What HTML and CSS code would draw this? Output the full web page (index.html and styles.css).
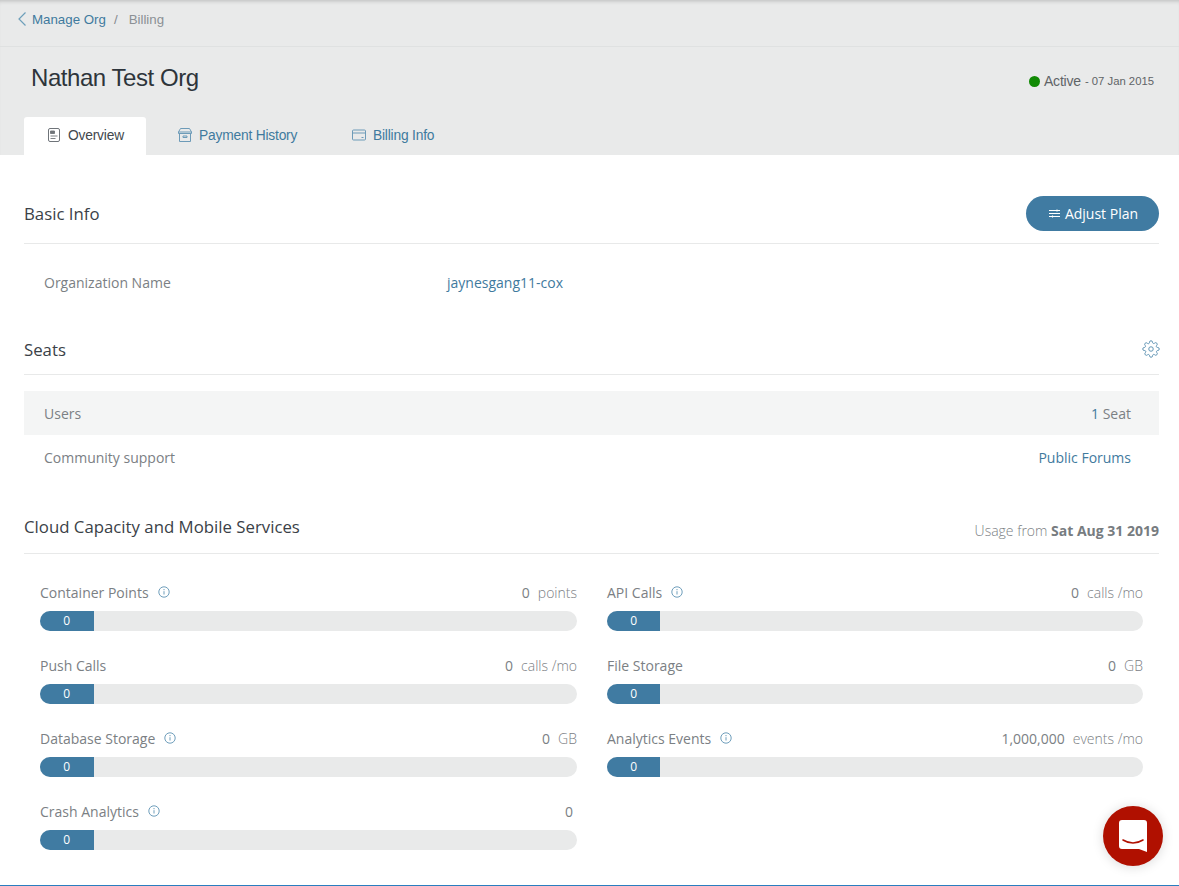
FILE: index.html
```html
<!DOCTYPE html>
<html lang="en">
<head>
<meta charset="utf-8">
<title>Billing</title>
<link rel="stylesheet" href="styles.css">
</head>
<body>
<div class="page">
  <header class="top">
    <nav class="crumbs">
      <svg class="crumb-back" width="10" height="16" viewBox="0 0 10 16"><path d="M8.5 1.5 2 8l6.500 6.500" fill="none" stroke="#6d9fba" stroke-width="1.200"/></svg>
      <a class="link">Manage Org</a><span class="sep">/</span><span class="current">Billing</span>
    </nav>
    <div class="title-row">
      <h1 class="org-title">Nathan Test Org</h1>
      <div class="status"><span class="dot"></span><span class="status-text">Active</span><span class="status-date">- 07 Jan 2015</span></div>
    </div>
    <div class="tabs">
      <a class="tab tab-active">
        <svg width="12" height="14" viewBox="0 0 12 14"><rect x=".5" y=".5" width="11" height="13" rx="1.500" fill="none" stroke="#6f7479"/><path d="M2.500 3h4v2.500h-4zM2.500 8h7M2.500 10.500h5" fill="#6f7479" stroke="#6f7479" stroke-width=".9"/></svg>
        Overview</a>
      <a class="tab">
        <svg width="14" height="14" viewBox="0 0 14 14" fill="none" stroke="#6d9bb8"><path d="M2.500 .5h9l2 3.500H.5zM.5 4v1.500h13V4M1.500 5.500v8h11v-8M5 8h4v1.500H5z"/></svg>
        Payment History</a>
      <a class="tab">
        <svg width="14" height="12" viewBox="0 0 14 12" fill="none" stroke="#6d9bb8"><rect x=".5" y="1" width="13" height="10" rx="1"/><path d="M.5 4h13M9.500 8.500h2"/></svg>
        Billing Info</a>
    </div>
  </header>

  <main class="content">
    <section class="basic">
      <div class="section-head head-basic">
        <h2 class="section-title">Basic Info</h2>
        <button class="btn"><svg width="11" height="9" viewBox="0 0 11 9" stroke="#fff" stroke-width="1.100"><path d="M0 1.500h11M0 4.500h11M0 7.500h11M8 .5v2M3.500 6.500v2"/></svg>Adjust Plan</button>
      </div>
      <div class="info-row"><span class="info-label">Organization Name</span><a class="link-plain">jaynesgang11-cox</a></div>
    </section>

    <section class="seats">
      <div class="section-head head-seats">
        <h2 class="section-title">Seats</h2>
        <svg class="gear" width="18" height="18" viewBox="0 0 24 24" fill="none" stroke="#5f93b3" stroke-width="1.300"><circle cx="12" cy="12" r="3"/><path d="M19.400 15a1.650 1.650 0 0 0 .33 1.820l.06.06a2 2 0 1 1-2.830 2.830l-.06-.06a1.650 1.650 0 0 0-2.800 1.170V21a2 2 0 1 1-4 0v-.09a1.650 1.650 0 0 0-2.800-1.170l-.06.06a2 2 0 1 1-2.830-2.830l.06-.06A1.650 1.650 0 0 0 3.090 14H3a2 2 0 1 1 0-4h.09A1.650 1.650 0 0 0 4.260 7.200l-.06-.06a2 2 0 1 1 2.830-2.830l.06.06A1.650 1.650 0 0 0 10 3.090V3a2 2 0 1 1 4 0v.09a1.650 1.650 0 0 0 2.800 1.170l.06-.06a2 2 0 1 1 2.830 2.830l-.06.06A1.650 1.650 0 0 0 20.910 10H21a2 2 0 1 1 0 4h-.09a1.650 1.650 0 0 0-1.510 1z"/></svg>
      </div>
      <div class="seat-row seat-shaded"><span>Users</span><span class="seat-value"><span class="seat-num">1</span> Seat</span></div>
      <div class="seat-row"><span>Community support</span><a class="link-plain">Public Forums</a></div>
    </section>

    <section class="capacity">
      <div class="section-head head-cap">
        <h2 class="section-title">Cloud Capacity and Mobile Services</h2>
        <span class="usage">Usage from <b>Sat Aug 31 2019</b></span>
      </div>
      <div class="meters">
        <div class="meter">
          <div class="meter-top"><span class="meter-name">Container Points<svg class="info" viewBox="0 0 12 12"><circle cx="6" cy="6" r="5.200"/><path d="M6 5.200v3.300M6 3v1.200"/></svg></span><span class="meter-val"><span>0</span><span class="unit">points</span></span></div>
          <div class="bar"><div class="fill">0</div></div>
        </div>
        <div class="meter">
          <div class="meter-top"><span class="meter-name">API Calls<svg class="info" viewBox="0 0 12 12"><circle cx="6" cy="6" r="5.200"/><path d="M6 5.200v3.300M6 3v1.200"/></svg></span><span class="meter-val"><span>0</span><span class="unit">calls /mo</span></span></div>
          <div class="bar"><div class="fill">0</div></div>
        </div>
        <div class="meter">
          <div class="meter-top"><span class="meter-name">Push Calls</span><span class="meter-val"><span>0</span><span class="unit">calls /mo</span></span></div>
          <div class="bar"><div class="fill">0</div></div>
        </div>
        <div class="meter">
          <div class="meter-top"><span class="meter-name">File Storage</span><span class="meter-val"><span>0</span><span class="unit">GB</span></span></div>
          <div class="bar"><div class="fill">0</div></div>
        </div>
        <div class="meter">
          <div class="meter-top"><span class="meter-name">Database Storage<svg class="info" viewBox="0 0 12 12"><circle cx="6" cy="6" r="5.200"/><path d="M6 5.200v3.300M6 3v1.200"/></svg></span><span class="meter-val"><span>0</span><span class="unit">GB</span></span></div>
          <div class="bar"><div class="fill">0</div></div>
        </div>
        <div class="meter">
          <div class="meter-top"><span class="meter-name">Analytics Events<svg class="info" viewBox="0 0 12 12"><circle cx="6" cy="6" r="5.200"/><path d="M6 5.200v3.300M6 3v1.200"/></svg></span><span class="meter-val"><span>1,000,000</span><span class="unit">events /mo</span></span></div>
          <div class="bar"><div class="fill">0</div></div>
        </div>
        <div class="meter">
          <div class="meter-top"><span class="meter-name">Crash Analytics<svg class="info" viewBox="0 0 12 12"><circle cx="6" cy="6" r="5.200"/><path d="M6 5.200v3.300M6 3v1.200"/></svg></span><span class="meter-val meter-val-bare"><span>0</span></span></div>
          <div class="bar"><div class="fill">0</div></div>
        </div>
      </div>
    </section>
  </main>

  <button class="chat" aria-label="Chat">
    <svg width="28" height="32" viewBox="0 0 28 32"><path d="M3 0h22a3 3 0 0 1 3 3v29l-8-3H3a3 3 0 0 1-3-3V3a3 3 0 0 1 3-3z" fill="#fff"/><path d="M4 20q10 6 20 0" fill="none" stroke="#b01000" stroke-width="1.600" stroke-linecap="round"/></svg>
  </button>
</div>
</body>
</html>
```

FILE: styles.css
```css
* { box-sizing: border-box; }
html, body { margin: 0; padding: 0; }
body {
  width: 1179px;
  height: 886px;
  overflow: hidden;
  background: #fff;
  font-family: "Open Sans", sans-serif;
  font-size: 14px;
  color: #7b8084;
}
.page {
  position: relative;
  height: 886px;
  border-bottom: 1px solid #2a7ebf;
  overflow: hidden;
}
.top {
  height: 155px;
  background: #e9eaea;
  box-shadow: inset 0 4px 4px -3px rgba(0, 0, 0, .2);
  font-family: "Liberation Sans", sans-serif;
}
.crumbs {
  height: 47px;
  padding: 11px 0 0 17px;
  display: flex;
  align-items: flex-start;
  font-size: 13.300px;
  line-height: 17px;
  border-bottom: 1px solid #dfe1e1;
}
.crumb-back { margin: 0 5px 0 0; }
.link { color: #3f7a9e; }
.sep { margin: 0 11px 0 8px; color: #85898d; }
.current { color: #8b9095; }
.title-row {
  height: 70px;
  padding: 0 25px 0 31px;
  display: flex;
  justify-content: space-between;
  align-items: flex-start;
}
.org-title {
  margin: 15px 0 0;
  font-size: 24px;
  line-height: 32px;
  font-weight: 400;
  color: #2e353b;
  letter-spacing: -.45px;
}
.status {
  margin-top: 26px;
  display: flex;
  align-items: center;
  line-height: 17px;
  color: #5f6467;
}
.dot {
  width: 11px;
  height: 11px;
  border-radius: 50%;
  background: #118a05;
  margin-right: 4px;
}
.status-text { font-size: 14px; margin-right: 4px; letter-spacing: -.2px; }
.status-date { font-size: 11.300px; }
.tabs {
  display: flex;
  padding-left: 24px;
  height: 38px;
}
.tab {
  width: 122px;
  height: 36px;
  display: flex;
  align-items: center;
  gap: 7px;
  padding-left: 24px;
  font-size: 13.800px;
  letter-spacing: -.2px;
  color: #3f7a9e;
  border-radius: 3px 3px 0 0;
  margin-right: 8px;
}
.tab:nth-child(2) { width: 174px; }
.tab:nth-child(3) { width: 150px; padding-left: 8px; margin-left: 8px; }
.tab-active { height: 38px; padding-bottom: 2px; gap: 8px; background: #fff; color: #42484d; }
.content { padding: 0 20px 0 24px; }
.section-head {
  display: flex;
  justify-content: space-between;
  border-bottom: 1px solid #e8e9e9;
}
.section-title {
  margin: 0;
  font-size: 16.800px;
  line-height: 22px;
  font-weight: 400;
  color: #3a4147;
}
.head-basic { height: 89px; padding-top: 41px; align-items: flex-start; }
.head-basic .section-title { margin-top: 7px; }
.btn {
  width: 133px;
  height: 35px;
  padding: 0 0 0 2px;
  border: 0;
  border-radius: 18px;
  background: #407ba2;
  color: #fff;
  font: 400 14px/35px "Open Sans", sans-serif;
  display: flex;
  align-items: center;
  justify-content: center;
  gap: 5px;
}
.info-row {
  display: flex;
  padding: 29px 0 0 20px;
  line-height: 20px;
  height: 83px;
}
.info-label { width: 403px; }
.link-plain { color: #3f7a9e; }
.head-seats { height: 48px; padding-top: 12px; }
.gear { margin: 1px -1px 0 0; }
.seat-row {
  display: flex;
  justify-content: space-between;
  align-items: center;
  height: 44px;
  padding: 0 28px 0 20px;
}
.seat-shaded { background: #f4f5f5; margin-top: 16px; }
.seat-num { color: #3f7a9e; }
.head-cap { margin-top: 29px; height: 46px; padding-top: 8px; align-items: flex-start; }
.usage { margin-top: 5px; font-size: 14px; font-weight: 300; }
.usage b { font-weight: 700; color: #777c80; }
.meters {
  padding: 0 16px;
  display: grid;
  grid-template-columns: 537px 536px;
  column-gap: 30px;
  row-gap: 24px;
  margin-top: 28px;
}
.meter-top {
  display: flex;
  justify-content: space-between;
  height: 29px;
  line-height: 22px;
}
.meter-name { display: flex; align-items: center; height: 22px; gap: 9px; }
.info {
  width: 12px;
  height: 12px;
  margin-top: -3px;
  fill: none;
  stroke: #5f93b3;
  stroke-width: .9;
}
.meter-val { display: flex; gap: 8px; }
.unit { font-size: 14px; font-weight: 300; }
.meter-val-bare { padding-right: 4px; }
.bar {
  height: 20px;
  border-radius: 10px;
  background: #e9eaea;
  overflow: hidden;
}
.fill {
  width: calc(10% - .2px);
  height: 20px;
  background: #407ba2;
  color: #fff;
  font-size: 12px;
  line-height: 20px;
  text-align: center;
}
.chat {
  position: absolute;
  left: 1103px;
  top: 806px;
  width: 60px;
  height: 60px;
  padding: 0;
  border: 0;
  border-radius: 50%;
  background: #b01000;
  box-shadow: 0 1px 12px rgba(0, 0, 0, .15);
  display: flex;
  align-items: center;
  justify-content: center;
}
```
